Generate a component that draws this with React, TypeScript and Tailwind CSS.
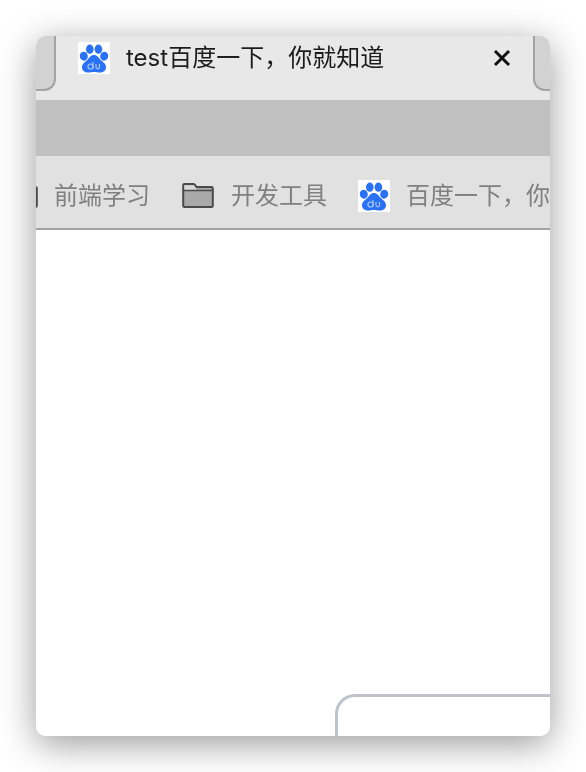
const CJK = "font-['Inter','Noto_Sans_CJK_SC',sans-serif]";

function Paw({ className }: { className: string }) {
  return (
    <svg viewBox="0 0 32 32" className={className}>
      <rect width="32" height="32" fill="#ffffff" />
      <g fill="#2a72f5">
        <ellipse cx="5.800" cy="14.200" rx="4" ry="4.500" transform="rotate(-18 5.8 14.2)" />
        <ellipse cx="11.800" cy="7.200" rx="3.800" ry="4.600" />
        <ellipse cx="20.400" cy="7.200" rx="3.800" ry="4.600" />
        <ellipse cx="26.200" cy="14.200" rx="4" ry="4.500" transform="rotate(18 26.2 14.2)" />
        <path d="M16 13c-3.200 0-4.600 2.600-6.200 4.400C7.600 19.800 4 21.400 4 25.200c0 3.600 3 5.300 6.200 5.300 2.200 0 3.800-.6 5.800-.6s3.600.6 5.800.6c3.200 0 6.200-1.700 6.200-5.300 0-3.800-3.600-5.400-5.800-7.800-1.600-1.800-3-4.400-6.200-4.400z" />
      </g>
      <g fill="none" stroke="#a9c6fb" strokeWidth="1.200">
        <circle cx="12.500" cy="24.500" r="2.500" />
        <path d="M15 20v6.500M18 22v3.300c0 2 3.500 2 3.500 0V22" />
      </g>
    </svg>
  );
}

function Folder({ className }: { className: string }) {
  return (
    <svg viewBox="0 0 32 25" className={className}>
      <path d="M1.200 2.200C1.200 1.500 1.700 1 2.400 1h8.800c.8 0 1.200.3 1.800 1l1.600 2h15c.7 0 1.200.5 1.200 1.200v17.600c0 .7-.5 1.200-1.200 1.200H2.400c-.7 0-1.200-.5-1.200-1.200z" fill="#a9a9a9" stroke="#4a4a4a" strokeWidth="2" />
      <path d="M1.500 7.500h29" stroke="#4a4a4a" strokeWidth="1.500" />
      <path d="M2.300 2.300h9.500l3 4.200H2.300z" fill="#d8d8d8" />
    </svg>
  );
}

export default function App() {
  return (
    <div className={`w-[586px] h-[772px] bg-white pt-[36px] pl-[36px] overflow-hidden ${CJK}`}>
      <div className="w-[514px] h-[700px] rounded-[10px] overflow-hidden flex flex-col bg-white blur-[0.6px] shadow-[0_8px_36px_rgba(0,0,0,0.4)]">
        <div className="h-[64px] shrink-0 flex bg-[#e8e8e8]">
          <div className="w-[20px] h-[55px] shrink-0 bg-[#d2d2d2] border-r-2 border-b-2 border-[#a3a3a3] rounded-br-[12px]" />
          <div className="flex-1 flex items-start pl-[22px] pr-[22px] min-w-0">
            <Paw className="w-[32px] h-[32px] mt-[6px] shrink-0" />
            <span className="ml-[16px] text-[24px] leading-[44px] text-[#1c1c1c] whitespace-nowrap">test百度一下，你就知道</span>
            <svg viewBox="0 0 18 18" className="w-[18px] h-[18px] mt-[13px] ml-auto shrink-0">
              <path d="M2 2l14 14M16 2L2 16" stroke="#111111" strokeWidth="3" />
            </svg>
          </div>
          <div className="w-[17px] h-[55px] shrink-0 bg-[#d2d2d2] border-l-2 border-b-2 border-[#a3a3a3] rounded-bl-[12px]" />
        </div>
        <div className="h-[56px] shrink-0 bg-[#c0c0c0]" />
        <div className="h-[74px] shrink-0 bg-[#e1e1e1] border-b-2 border-[#a2a2a2] pt-[7px] flex items-center overflow-hidden whitespace-nowrap text-[24px] text-[#808080]">
          <Folder className="w-[32px] h-[25px] ml-[-30px] shrink-0" />
          <span className="ml-[16px] shrink-0">前端学习</span>
          <Folder className="w-[32px] h-[25px] ml-[32px] shrink-0" />
          <span className="ml-[17px] shrink-0">开发工具</span>
          <Paw className="w-[32px] h-[32px] ml-[31px] shrink-0" />
          <span className="ml-[16px] shrink-0">百度一下，你就知道</span>
        </div>
        <div className="flex-1 min-h-0 flex flex-col justify-end bg-white">
          <div className="ml-[299px] h-[42px] border-l-[3px] border-t-[3px] border-[#bfc4cc] rounded-tl-[20px]" />
        </div>
      </div>
    </div>
  );
}
